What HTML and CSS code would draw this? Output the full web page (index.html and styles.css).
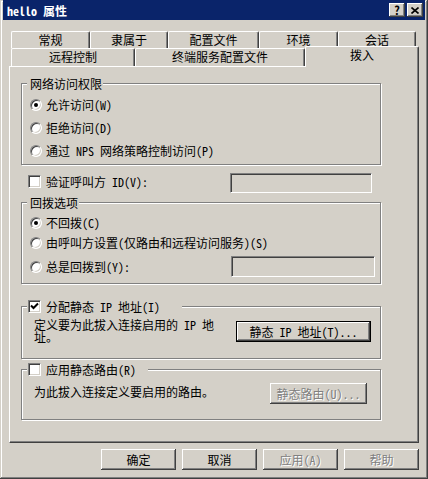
FILE: index.html
```html
<!DOCTYPE html>
<html lang="zh-CN">
<head>
    <meta charset="UTF-8">
    <meta name="viewport" content="width=device-width, initial-scale=1.0">
    <title>hello 属性</title>
    <link rel="stylesheet" href="styles.css">
</head>
<body>
    <div class="window">
        <div class="titlebar">
            <span class="title">hello 属性</span>
            <span class="tbtn raised">?</span>
            <span class="tbtn raised">
                <svg width="8" height="7" viewBox="0 0 8 7"><path d="M0.5 0.5 L7.5 6.5 M7.5 0.5 L0.5 6.5" stroke="#000" stroke-width="1.6" fill="none"/></svg>
            </span>
        </div>
        <div class="content">
            <div class="tabs">
                <div class="tabrow back">
                    <div class="tab" style="width:79px">常规</div>
                    <div class="tab" style="width:78px">隶属于</div>
                    <div class="tab" style="width:91px">配置文件</div>
                    <div class="tab" style="width:79px">环境</div>
                    <div class="tab" style="width:78px">会话</div>
                </div>
                <div class="tabrow front">
                    <div class="tab" style="width:124px">远程控制</div>
                    <div class="tab" style="width:170px">终端服务配置文件</div>
                    <div class="tab active" style="width:114px">拨入</div>
                </div>
            </div>
            <div class="panel">
                <fieldset class="group g1">
                    <legend>网络访问权限</legend>
                    <div class="options">
                        <div class="opt"><span class="radio on"></span>允许访问(W)</div>
                        <div class="opt"><span class="radio"></span>拒绝访问(D)</div>
                        <div class="opt"><span class="radio"></span>通过 NPS 网络策略控制访问(P)</div>
                    </div>
                </fieldset>

                <div class="idrow">
                    <label class="checklabel"><span class="check"></span>验证呼叫方 ID(V):</label>
                    <span class="field"></span>
                </div>

                <fieldset class="group g2">
                    <legend>回拨选项</legend>
                    <div class="options">
                        <div class="opt"><span class="radio on"></span>不回拨(C)</div>
                        <div class="opt"><span class="radio"></span>由呼叫方设置(仅路由和远程访问服务)(S)</div>
                        <div class="opt with-field">
                            <span class="optlabel"><span class="radio"></span>总是回拨到(Y):</span>
                            <span class="field wide"></span>
                        </div>
                    </div>
                </fieldset>

                <fieldset class="group g3">
                    <legend class="checklegend">
                        <span class="check on">
                            <svg width="9" height="9" viewBox="0 0 9 9"><path d="M1 3.5 L3.5 6 L8 1.5" stroke="#000" stroke-width="2" fill="none"/></svg>
                        </span>分配静态 IP 地址(I)
                    </legend>
                    <div class="row">
                        <p class="note">定义要为此拔入连接启用的 IP 地址。</p>
                        <span class="btn default raised ipbtn">静态 IP 地址(T)...</span>
                    </div>
                </fieldset>

                <fieldset class="group g4">
                    <legend class="checklegend"><span class="check"></span>应用静态路由(R)</legend>
                    <div class="row">
                        <p class="note">为此拔入连接定义要启用的路由。</p>
                        <span class="btn raised disabled routebtn">静态路由(U)...</span>
                    </div>
                </fieldset>
            </div>

            <div class="actions">
                <span class="btn raised">确定</span>
                <span class="btn raised">取消</span>
                <span class="btn raised disabled">应用(A)</span>
                <span class="btn raised disabled">帮助</span>
            </div>
        </div>
    </div>
</body>
</html>
```
FILE: styles.css
```css
* {
    box-sizing: border-box;
}
body {
    margin: 0;
    font-family: "Noto Sans Mono CJK SC", "Noto Sans CJK SC", sans-serif;
    font-size: 12px;
    color: #000;
    background: #d4d0c8;
}
.window {
    width: 428px;
    height: 479px;
    padding: 0 3px 3px;
    background: #d4d0c8;
    box-shadow: inset -1px -1px #404040, inset 1px 1px #d4d0c8, inset -2px -2px #808080, inset 2px 2px #fff;
}
.raised {
    background: #d4d0c8;
    box-shadow: inset -1px -1px #404040, inset 1px 1px #fff, inset -2px -2px #808080, inset 2px 2px #d4d0c8;
}
.titlebar {
    height: 20px;
    background: #0a246a;
    color: #fff;
    font-weight: bold;
    display: flex;
    align-items: center;
    gap: 2px;
    padding: 0 2px;
}
.title {
    flex: 1;
    padding-left: 2px;
    font-size: 12px;
}
.tbtn {
    width: 16px;
    height: 14px;
    color: #000;
    font-size: 12px;
    line-height: 14px;
    display: flex;
    align-items: center;
    justify-content: center;
}
.content {
    padding: 11px 6px 0;
}
.tabs {
    padding-left: 2px;
}
.tabrow {
    display: flex;
}
.tabrow.back {
    height: 17px;
}
.tabrow.front {
    height: 18px;
}
.tab {
    height: 100%;
    border-top: 1px solid #fff;
    border-left: 1px solid #fff;
    border-right: 1px solid #404040;
    box-shadow: inset -1px 0 #808080;
    border-radius: 2px 2px 0 0;
    background: #d4d0c8;
    text-align: center;
    line-height: 16px;
}
.tab.active {
    height: 21px;
    margin-top: -2px;
    position: relative;
    z-index: 1;
}
.panel {
    height: 377px;
    border-top: 1px solid #fff;
    border-left: 1px solid #fff;
    border-right: 1px solid #404040;
    border-bottom: 1px solid #404040;
    box-shadow: inset -1px -1px #808080;
    padding: 10px 11px 0;
}
.group {
    width: 360px;
    min-width: 0;
    margin: 0;
    padding: 0;
    border: 1px solid #808080;
    box-shadow: inset 1px 1px #fff, 1px 1px #fff;
}
.group legend {
    margin-left: 5px;
    padding: 0 1px 0 3px;
    height: 13px;
    line-height: 13px;
    background: #d4d0c8;
}
.group legend.checklegend {
    display: flex;
    align-items: center;
    gap: 5px;
    padding: 0 0 0 1px;
}
.g3 legend.checklegend {
    padding-right: 22px;
}
.g4 legend.checklegend {
    padding-right: 12px;
}
.options {
    padding: 3px 0 2px 8px;
}
.opt {
    display: flex;
    align-items: center;
    gap: 4px;
    height: 23px;
}
.g2 .options {
    padding: 5px 0 6px 8px;
}
.g2 .opt {
    height: 17px;
    margin-top: 3px;
}
.g2 .opt:first-child {
    margin-top: 0;
}
.g2 .opt.with-field {
    width: 345px;
    height: 21px;
    margin-top: 5px;
    justify-content: space-between;
}
.optlabel {
    display: flex;
    align-items: center;
    gap: 4px;
}
.radio {
    position: relative;
    width: 12px;
    height: 12px;
    flex: none;
    border-radius: 50%;
    background: #fff;
    border: 1px solid;
    border-color: #808080 #fff #fff #808080;
    box-shadow: inset 1px 1px #404040, inset -1px -1px #d4d0c8;
}
.radio.on::after {
    content: "";
    position: absolute;
    left: 3px;
    top: 3px;
    width: 4px;
    height: 4px;
    border-radius: 50%;
    background: #000;
}
.check {
    width: 13px;
    height: 13px;
    flex: none;
    background: #fff;
    border: 1px solid;
    border-color: #808080 #fff #fff #808080;
    box-shadow: inset 1px 1px #404040, inset -1px -1px #d4d0c8;
    display: flex;
    align-items: center;
    justify-content: center;
}
.idrow {
    width: 344px;
    margin: 8px 0 0 7px;
    display: flex;
    justify-content: space-between;
    align-items: flex-start;
}
.checklabel {
    height: 16px;
    display: flex;
    align-items: center;
    gap: 5px;
}
.field {
    width: 142px;
    height: 20px;
    background: #d4d0c8;
    border: 1px solid;
    border-color: #808080 #fff #fff #808080;
    box-shadow: inset 1px 1px #404040, inset -1px -1px #d4d0c8;
}
.field.wide {
    width: 144px;
    height: 21px;
}
.g2 {
    margin-top: 3px;
}
.g3 {
    margin-top: 16px;
}
.g4 {
    margin-top: 4px;
}
.row {
    display: flex;
    justify-content: space-between;
    align-items: flex-start;
    padding: 0 9px 15px 12px;
}
.note {
    margin: 6px 0 0;
    width: 192px;
    line-height: 12px;
}
.g4 .note {
    margin-top: 10px;
    width: auto;
}
.btn {
    width: 75px;
    height: 21px;
    line-height: 21px;
    text-align: center;
    white-space: nowrap;
}
.btn.default {
    border: 1px solid #000;
    line-height: 19px;
}
.btn.disabled {
    color: #808080;
    text-shadow: 1px 1px #fff;
}
.ipbtn {
    width: 135px;
    margin-top: 8px;
}
.routebtn {
    width: 97px;
    margin-top: 7px;
    margin-right: 4px;
}
.actions {
    display: flex;
    justify-content: flex-end;
    gap: 6px;
    margin-top: 6px;
}
```
